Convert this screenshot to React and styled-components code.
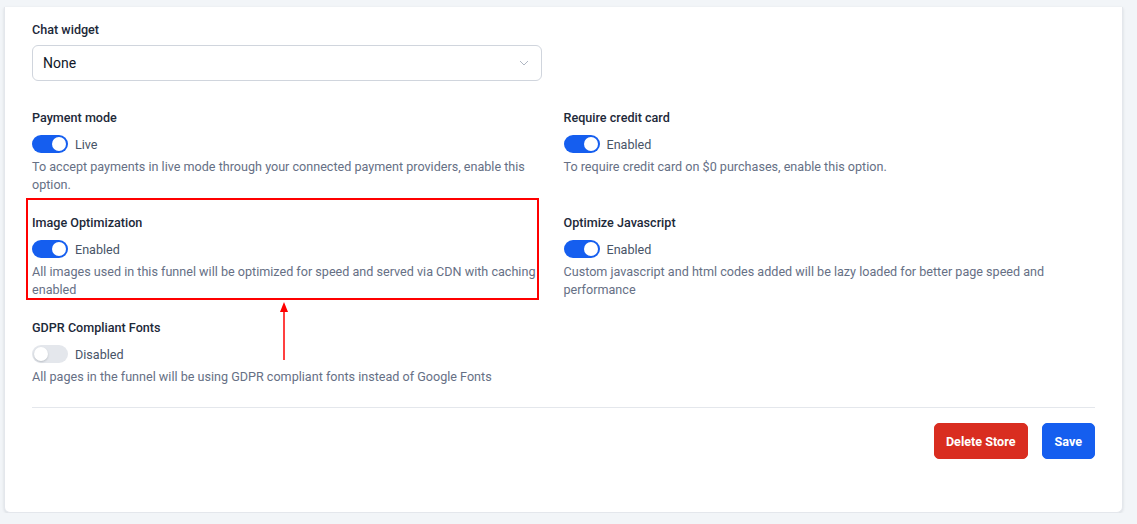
import React from 'react';
import styled, { createGlobalStyle } from 'styled-components';

const GlobalStyle = createGlobalStyle`
  html, body {
    margin: 0;
    padding: 0;
    background: #f2f5f8;
    font-family: Roboto, "Liberation Sans", Arial, sans-serif;
  }
  * { box-sizing: border-box; }
`;

const Card = styled.div`
  position: relative;
  width: 1119px;
  margin: 7px 14px 0 4px;
  padding: 14px 27px 53px;
  background: #fff;
  border: 1px solid #e4e7ec;
  border-top: none;
  border-radius: 0 0 6px 6px;
  box-shadow: 0 1px 3px rgba(16, 24, 40, 0.12);
`;

const Label = styled.div`
  font-size: 12.6px;
  line-height: 18px;
  font-weight: 500;
  color: #1d2939;
`;

const SelectBox = styled.div`
  display: flex;
  align-items: center;
  justify-content: space-between;
  width: 510px;
  height: 36px;
  margin-top: 6px;
  padding: 0 12px 0 10px;
  border: 1px solid #d0d5dd;
  border-radius: 6px;
  font-size: 14px;
  color: #101828;
`;

const Grid = styled.div`
  display: grid;
  grid-template-columns: 1fr 1fr;
  row-gap: 20px;
  margin-top: 28px;
`;

const Cell = styled.div`
  position: relative;
  padding-right: ${p => (p.$right ? '0' : '20px')};
`;

const ToggleRow = styled.div`
  display: flex;
  align-items: center;
  gap: 7px;
  margin-top: 8px;
  font-size: 12.6px;
  color: #475467;
`;

const Track = styled.span`
  position: relative;
  display: inline-block;
  width: 36px;
  height: 18px;
  border-radius: 9px;
  background: ${p => (p.$on ? '#155eef' : '#e4e7ec')};

  &::after {
    content: '';
    position: absolute;
    top: 2px;
    left: ${p => (p.$on ? '20px' : '2px')};
    width: 14px;
    height: 14px;
    border-radius: 50%;
    background: #fff;
    box-shadow: ${p => (p.$on ? 'none' : '0 1px 2px rgba(16,24,40,0.2)')};
  }
`;

const Desc = styled.p`
  margin: 5px 0 0;
  font-size: 12.6px;
  line-height: 18px;
  color: #667085;
`;

const Divider = styled.hr`
  margin: 21px 0 0;
  border: none;
  border-top: 1px solid #e4e7ec;
`;

const Actions = styled.div`
  display: flex;
  justify-content: flex-end;
  gap: 14px;
  margin-top: 15px;
`;

const Button = styled.button`
  height: 36px;
  padding: 0 ${p => (p.$danger ? '11px' : '12px')};
  border: 1px solid ${p => (p.$danger ? '#d92d20' : '#155eef')};
  border-radius: 5px;
  background: ${p => (p.$danger ? '#d92d20' : '#155eef')};
  color: #fff;
  font-family: inherit;
  font-size: 12.6px;
  font-weight: 700;
`;

const Highlight = styled.div`
  position: absolute;
  top: -16px;
  left: -6px;
  width: 513px;
  height: 102px;
  border: 2px solid #f00;
  pointer-events: none;
`;

const Arrow = styled.svg`
  position: absolute;
  left: 247px;
  top: 88px;
`;

const Chevron = () => (
  <svg width="10" height="6" viewBox="0 0 10 6" fill="none">
    <path d="M1 1l4 4 4-4" stroke="#b0b7c3" strokeWidth="1" />
  </svg>
);

const Setting = ({ title, on, state, desc, right, children }) => (
  <Cell $right={right}>
    <Label>{title}</Label>
    <ToggleRow>
      <Track $on={on} />
      {state}
    </ToggleRow>
    <Desc>{desc}</Desc>
    {children}
  </Cell>
);

export default function App() {
  return (
    <>
      <GlobalStyle />
      <Card>
        <Label>Chat widget</Label>
        <SelectBox>
          None
          <Chevron />
        </SelectBox>
        <Grid>
          <Setting
            title="Payment mode"
            on
            state="Live"
            desc="To accept payments in live mode through your connected payment providers, enable this option."
          />
          <Setting
            right
            title="Require credit card"
            on
            state="Enabled"
            desc="To require credit card on $0 purchases, enable this option."
          />
          <Setting
            title="Image Optimization"
            on
            state="Enabled"
            desc="All images used in this funnel will be optimized for speed and served via CDN with caching enabled"
          >
            <Highlight />
            <Arrow width="10" height="60" viewBox="0 0 10 60">
              <line x1="5" y1="8" x2="5" y2="58" stroke="#f00" strokeWidth="1.5" />
              <path d="M5 0L9 10H1Z" fill="#f00" />
            </Arrow>
          </Setting>
          <Setting
            right
            title="Optimize Javascript"
            on
            state="Enabled"
            desc="Custom javascript and html codes added will be lazy loaded for better page speed and performance"
          />
          <Setting
            title="GDPR Compliant Fonts"
            state="Disabled"
            desc="All pages in the funnel will be using GDPR compliant fonts instead of Google Fonts"
          />
        </Grid>
        <Divider />
        <Actions>
          <Button $danger>Delete Store</Button>
          <Button>Save</Button>
        </Actions>
      </Card>
    </>
  );
}
